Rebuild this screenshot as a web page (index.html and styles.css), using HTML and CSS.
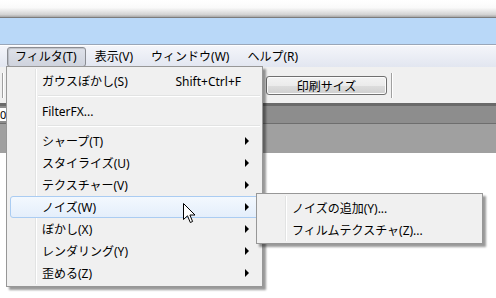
FILE: index.html
```html
<!DOCTYPE html>
<html lang="ja">
<head>
  <meta charset="UTF-8" />
  <title>フィルタ メニュー</title>
  <link rel="stylesheet" href="styles.css">
</head>
<body>
  <div class="window">
    <div class="frame-top"></div>
    <div class="title-band"></div>
    <nav class="menubar">
      <span class="menu-title pressed">フィルタ(T)</span>
      <span class="menu-title">表示(V)</span>
      <span class="menu-title">ウィンドウ(W)</span>
      <span class="menu-title">ヘルプ(R)</span>
    </nav>
    <div class="toolbar">
      <span class="tool-sep edge"></span>
      <button class="tool-btn">印刷サイズ</button>
      <span class="tool-sep"></span>
    </div>
    <div class="tabs-band"><span class="stub">0</span></div>
    <div class="gray-band"></div>
    <div class="canvas"></div>
  </div>

  <div class="menu main-menu">
    <div class="item"><span class="label">ガウスぼかし(S)</span><span class="shortcut">Shift+Ctrl+F</span></div>
    <div class="sep"></div>
    <div class="item"><span class="label">FilterFX...</span></div>
    <div class="sep"></div>
    <div class="item sub"><span class="label">シャープ(T)</span><span class="arrow"></span></div>
    <div class="item sub"><span class="label">スタイライズ(U)</span><span class="arrow"></span></div>
    <div class="item sub"><span class="label">テクスチャー(V)</span><span class="arrow"></span></div>
    <div class="item sub active"><span class="label">ノイズ(W)</span><span class="arrow"></span></div>
    <div class="item sub"><span class="label">ぼかし(X)</span><span class="arrow"></span></div>
    <div class="item sub"><span class="label">レンダリング(Y)</span><span class="arrow"></span></div>
    <div class="item sub"><span class="label">歪める(Z)</span><span class="arrow"></span></div>
  </div>

  <div class="menu sub-menu">
    <div class="item"><span class="label">ノイズの追加(Y)...</span></div>
    <div class="item"><span class="label">フィルムテクスチャ(Z)...</span></div>
  </div>

  <svg class="cursor" width="13" height="21" viewBox="0 0 13 21">
    <path d="M0.5 0.5 L0.5 16.5 L4.5 12.8 L7.3 19.5 L9.6 18.5 L6.9 12 L12 12 Z" fill="#fff" stroke="#000" stroke-width="1" stroke-linejoin="miter"/>
  </svg>
</body>
</html>
```

FILE: styles.css
```css
body {
  margin: 0;
  width: 496px;
  height: 298px;
  overflow: hidden;
  font-family: "Noto Sans", "Noto Sans CJK JP", sans-serif;
  font-size: 12px;
  color: #000;
  background: #fff;
  position: relative;
}
.window {
  display: flex;
  flex-direction: column;
  height: 298px;
}
.frame-top {
  height: 17px;
  background: linear-gradient(#ffffff 0%, #fafafa 45%, #d4d4d4 85%, #a8a8a8 100%);
  border-bottom: 1px solid #7c7c7c;
}
.title-band {
  height: 26px;
  background: #b9d8f8;
  border-bottom: 1px solid #9aa6b8;
}
.menubar {
  height: 21px;
  display: flex;
  align-items: center;
  padding-left: 7px;
  background: linear-gradient(#f4f5fa, #e2e6f0);
  border-top: 1px solid #ffffff;
}
.menu-title {
  padding: 0 8px;
  line-height: 18px;
  border: 1px solid transparent;
  border-radius: 3px;
}
.menu-title.pressed {
  padding: 0 8px 0 7px;
  background: linear-gradient(#dfe2ea, #cfd3dd);
  border-color: #8a8c92;
  box-shadow: inset 1px 1px 1px rgba(0, 0, 0, 0.15);
}
.toolbar {
  height: 36px;
  background: #f0f0f0;
  display: flex;
  align-items: center;
}
.tool-sep {
  width: 1px;
  height: 25px;
  background: #a0a0a0;
  border-right: 1px solid #fff;
  margin-left: 4px;
}
.tool-sep.edge {
  margin-left: 2px;
  margin-right: 262px;
}
.tool-btn {
  width: 121px;
  height: 19px;
  padding: 0;
  font: inherit;
  color: #000;
  border: 1px solid #707070;
  border-radius: 3px;
  background: linear-gradient(#f3f3f3 0%, #ebebeb 50%, #dddddd 51%, #cfcfcf 100%);
  box-shadow: inset 0 0 0 1px #fcfcfc;
}
.tabs-band {
  height: 17px;
  background: #8d8d8d;
  border-top: 3px solid #6a6a6a;
  border-bottom: 1px solid #6e6e6e;
}
.stub {
  display: inline-block;
  width: 6px;
  height: 13px;
  background: #fff;
  font-size: 11px;
  line-height: 13px;
  overflow: hidden;
  margin-top: 2px;
}
.gray-band {
  height: 29px;
  background: #a0a0a0;
}
.canvas {
  flex: 1;
  background: #fff;
}

.menu {
  position: absolute;
  background: #f0f0f0;
  border: 1px solid #979797;
  box-shadow: 3px 3px 2px rgba(0, 0, 0, 0.4);
  padding: 3px 0 2px;
}
.menu::before {
  content: "";
  position: absolute;
  top: 2px;
  bottom: 2px;
  left: 28px;
  width: 1px;
  background: #e2e3e3;
  border-right: 1px solid #ffffff;
}
.main-menu {
  left: 6px;
  top: 66px;
  width: 255px;
}
.sub-menu {
  left: 256px;
  top: 193px;
  width: 225px;
}
.item {
  position: relative;
  display: flex;
  align-items: center;
  height: 22px;
  margin: 0 3px;
  padding-left: 31px;
  border: 1px solid transparent;
  border-width: 0 1px;
  border-radius: 3px;
  box-sizing: border-box;
}
.item .label {
  flex: 1;
  white-space: nowrap;
}
.shortcut {
  margin-right: 17px;
}
.arrow {
  width: 0;
  height: 0;
  border-left: 4px solid #000;
  border-top: 4px solid transparent;
  border-bottom: 4px solid transparent;
  margin-right: 9px;
}
.item.active {
  border: 1px solid #aaccf2;
  background: linear-gradient(#f3f8fe, #e4eefb);
}
.sep {
  height: 8px;
  margin-left: 31px;
  position: relative;
}
.sep::after {
  content: "";
  position: absolute;
  left: 0;
  right: 2px;
  top: 3px;
  height: 1px;
  background: #e2e3e3;
  border-bottom: 1px solid #ffffff;
}
.cursor {
  position: absolute;
  left: 183px;
  top: 203px;
}
```
